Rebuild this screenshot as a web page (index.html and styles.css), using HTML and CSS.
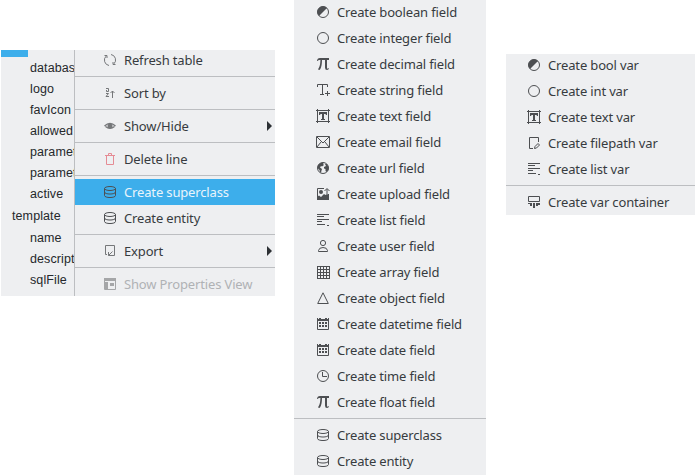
FILE: index.html
```html
<!DOCTYPE html>
<html lang="en">
<head>
<meta charset="utf-8">
<title>Context menus</title>
<link rel="stylesheet" href="styles.css">
</head>
<body>
<svg class="defs" aria-hidden="true">
  <symbol id="bool" viewBox="0 0 16 16"><circle cx="8" cy="8" r="5.5"/><path class="f" d="M4 12A5.5 5.5 0 0 1 12 4Z"/></symbol>
  <symbol id="circle" viewBox="0 0 16 16"><circle cx="8" cy="8" r="5.5"/></symbol>
  <symbol id="pi" viewBox="0 0 16 16"><path class="f" d="M2 5C2.3 3 3 2 5 2H14V4H12V11.5Q12 12.7 12.8 12.7Q13.2 12.700 13.500 12H14Q13.800 14 12 14Q10 14 10 11.500V4H7C7 8 6.500 11 5.200 13.200Q4.400 14.400 3.200 13.600Q2.800 13 3.800 12C5 10 5.300 7 5.400 4H4.500Q3 4 2.700 5Z"/></symbol>
  <symbol id="string" viewBox="0 0 16 16"><path d="M2.500 5V2.500H12.500V5M7.500 2.500V12.500M5 12.500H9M12.500 9V14M10 11.500H15"/></symbol>
  <symbol id="text" viewBox="0 0 16 16"><path d="M1 2.500H15M1 13.500H15M2.500 1V15M13.500 1V15"/><path class="f" d="M4 4H12V7H11L10.500 6H9V11H10V12H6V11H7V6H5.500L5 7H4Z"/></symbol>
  <symbol id="mail" viewBox="0 0 16 16"><path d="M1.500 2.500H14.500V13.500H1.500ZM2 3L8 9L14 3M2 13L6 8M14 13L10 8"/></symbol>
  <symbol id="globe" viewBox="0 0 16 16"><circle cx="8" cy="8" r="5.500"/><path class="f" d="M3 5Q5 2 9 2.500L8 4L9 5L7 6.500L6 6L5 7.500L7 9L6.500 10.500L6 13Q4.500 12 4.500 10L2.500 8ZM10 4L12 4L13.500 7V10L11.500 12L10.500 11V9L9 8.500V7L11 6Z"/></symbol>
  <symbol id="upload" viewBox="0 0 16 16"><path d="M9 2.500H2.500V13.500H13.500V8M12 8V3M9.500 5L12 2.500L14.500 5"/><circle class="f" cx="6" cy="6" r="2"/><path class="f" d="M2 11L4 9.500L6 11L9 8L10.500 9L12 8L14 9V14H2Z"/></symbol>
  <symbol id="list" viewBox="0 0 16 16"><path d="M2 2.500H14M2 4.500H9M2 7.500H14M2 9.500H7M2 12.500H10M12 13.500H14"/></symbol>
  <symbol id="user" viewBox="0 0 16 16"><circle cx="8" cy="5" r="2.600"/><path d="M3.500 13.500V12.500Q4 9.500 8 9.500T12.500 12.500V13.500Z"/></symbol>
  <symbol id="array" viewBox="0 0 16 16"><path d="M2.500 2V15M5.500 2V15M8.500 2V15M11.500 2V15M14.500 2V15M2 2.500H15M2 5.500H15M2 8.500H15M2 11.500H15M2 14.500H15"/></symbol>
  <symbol id="object" viewBox="0 0 16 16"><path d="M8 2.800L13.300 13.500H2.700Z"/></symbol>
  <symbol id="date" viewBox="0 0 16 16"><path d="M2.500 2V13.500H13.500V2"/><path class="f" d="M2 3H4V2H6V3H10V2H12V3H14V5H2ZM4 6H6V8H4ZM7 6H9V8H7ZM10 6H12V8H10ZM4 9H6V11H4ZM7 9H9V11H7ZM10 9H12V11H10Z"/></symbol>
  <symbol id="time" viewBox="0 0 16 16"><circle cx="8" cy="8" r="5.500"/><path d="M7.500 4V8.500H12"/></symbol>
  <symbol id="db" viewBox="0 0 16 16"><ellipse cx="8" cy="4.500" rx="5.500" ry="2"/><path d="M2.500 4.500V11.500C2.500 14.200 13.500 14.200 13.500 11.500V4.500M2.500 8C2.500 10.700 13.500 10.700 13.500 8"/></symbol>
  <symbol id="file" viewBox="0 0 16 16"><path d="M7 13.500H3.500V2.500H12.500V7M8.500 13.500L9 11.500L12 8.500L13.500 10L10.500 13Z"/></symbol>
  <symbol id="container" viewBox="0 0 16 16"><path d="M2.500 2.500H13.500V7.500H2.500Z"/><path class="f" d="M2 9H6V12H4V10H2ZM7 9H9V14H7ZM10 9H14V11H12V12H10Z"/></symbol>
  <symbol id="refresh" viewBox="0 0 16 16"><path d="M7 13.500A5.500 5.500 0 0 1 4 4.200M2.500 3.500H5V6M9 2.500A5.500 5.500 0 0 1 12 11.800M13.500 12.500H11V10"/></symbol>
  <symbol id="sort" viewBox="0 0 16 16"><path d="M4 3.500H6.500V6.500H4.500V5M4 8.500H6.500L4 11.500H7M10.500 13V6M8.500 8L10.500 6L12.500 8"/></symbol>
  <symbol id="eye" viewBox="0 0 16 16"><path stroke-width="1.3" d="M2.500 8Q8 3 13.500 8M3.500 8.500Q8 12 12.500 8.500"/><circle class="f" cx="8" cy="8" r="2.500"/></symbol>
  <symbol id="trash" viewBox="0 0 16 16"><path d="M3 4.500H13M4.500 4.500V13.500H11.500V4.500M6.500 4V2.500H9.500V4"/></symbol>
  <symbol id="export" viewBox="0 0 16 16"><path d="M5 11.500H3.500V2.500H12.500V12.500H10M10.500 8.500L6.500 12.500M6.500 9V12.500H10"/></symbol>
  <symbol id="props" viewBox="0 0 16 16"><path d="M2.500 2.500H13.500V13.500H2.500Z"/><path class="f" d="M2 2H14V5H2ZM3 6H6V13H3ZM8 7H12V10H8Z"/></symbol>
</svg>
<main class="board">
  <section class="editor">
    <div class="tree">
      <div class="selection"></div>
      <ul class="nodes">
        <li>databas</li><li>logo</li><li>favIcon</li><li>allowed</li><li>paramet</li><li>paramet</li><li>active</li>
        <li class="parent">template</li>
        <li>name</li><li>descript</li><li>sqlFile</li>
      </ul>
    </div>
    <ul class="menu context">
      <li class="item"><svg class="soft"><use href="#refresh"/></svg>Refresh table</li>
      <li class="sep"></li>
      <li class="item"><svg class="soft"><use href="#sort"/></svg>Sort by</li>
      <li class="sep"></li>
      <li class="item sub"><svg class="soft"><use href="#eye"/></svg>Show/Hide</li>
      <li class="sep"></li>
      <li class="item"><svg class="danger"><use href="#trash"/></svg>Delete line</li>
      <li class="sep"></li>
      <li class="item active"><svg><use href="#db"/></svg>Create superclass</li>
      <li class="item"><svg><use href="#db"/></svg>Create entity</li>
      <li class="sep"></li>
      <li class="item sub"><svg class="soft"><use href="#export"/></svg>Export</li>
      <li class="sep"></li>
      <li class="item disabled"><svg><use href="#props"/></svg>Show Properties View</li>
    </ul>
  </section>
  <ul class="menu fields">
    <li class="item"><svg><use href="#bool"/></svg>Create boolean field</li>
    <li class="item"><svg><use href="#circle"/></svg>Create integer field</li>
    <li class="item"><svg><use href="#pi"/></svg>Create decimal field</li>
    <li class="item"><svg><use href="#string"/></svg>Create string field</li>
    <li class="item"><svg><use href="#text"/></svg>Create text field</li>
    <li class="item"><svg><use href="#mail"/></svg>Create email field</li>
    <li class="item"><svg><use href="#globe"/></svg>Create url field</li>
    <li class="item"><svg><use href="#upload"/></svg>Create upload field</li>
    <li class="item"><svg><use href="#list"/></svg>Create list field</li>
    <li class="item"><svg><use href="#user"/></svg>Create user field</li>
    <li class="item"><svg><use href="#array"/></svg>Create array field</li>
    <li class="item"><svg><use href="#object"/></svg>Create object field</li>
    <li class="item"><svg><use href="#date"/></svg>Create datetime field</li>
    <li class="item"><svg><use href="#date"/></svg>Create date field</li>
    <li class="item"><svg><use href="#time"/></svg>Create time field</li>
    <li class="item"><svg><use href="#pi"/></svg>Create float field</li>
    <li class="sep"></li>
    <li class="item"><svg><use href="#db"/></svg>Create superclass</li>
    <li class="item"><svg><use href="#db"/></svg>Create entity</li>
  </ul>
  <ul class="menu vars">
    <li class="item"><svg><use href="#bool"/></svg>Create bool var</li>
    <li class="item"><svg><use href="#circle"/></svg>Create int var</li>
    <li class="item"><svg><use href="#text"/></svg>Create text var</li>
    <li class="item"><svg><use href="#file"/></svg>Create filepath var</li>
    <li class="item"><svg><use href="#list"/></svg>Create list var</li>
    <li class="sep"></li>
    <li class="item"><svg><use href="#container"/></svg>Create var container</li>
  </ul>
</main>
</body>
</html>
```
FILE: styles.css
```css
* { box-sizing: border-box; }
body { margin: 0; background: #fff; overflow: hidden; }
ul { list-style: none; margin: 0; padding: 0; }
.defs { display: none; }
.board { display: flex; align-items: flex-start; height: 475px; }
.editor { display: flex; width: 274px; height: 246px; margin: 50px 19px 0 1px; background: #eeeff1; overflow: hidden; }
.tree { width: 73px; overflow: hidden; }
.selection { width: 27px; height: 7px; background: #3daeeb; }
.nodes { padding-top: 1px; font: 12.5px/21px "Liberation Sans", Arial, sans-serif; letter-spacing: 0.1px; color: #25282b; white-space: nowrap; }
.nodes li { height: 21px; padding-left: 29px; }
.nodes .parent { height: 22px; padding-left: 11px; line-height: 23px; }
.nodes .parent ~ li { line-height: 22px; }
.menu { background: #eeeff1; color: #373b40; font: 13px/26px "Noto Sans", sans-serif; letter-spacing: -0.15px; overflow: hidden; flex: none; }
.context { width: 201px; border-left: 1px solid #bcbec1; }
.context .item:first-child { margin-top: -3px; }
.fields { width: 192px; height: 475px; margin-right: 20px; }
.fields .item:first-child { margin-top: -1px; }
.vars { width: 189px; height: 161px; margin-top: 54px; }
.vars .item:first-child { margin-top: -2px; }
.item { display: flex; align-items: center; gap: 6px; height: 26px; white-space: nowrap; }
.context .item { padding-left: 27px; }
.fields .item { padding-left: 21px; }
.vars .item { padding-left: 20px; }
.sep { height: 7px; padding-top: 3px; }
.sep::before { content: ""; display: block; height: 1px; background: #bcbec1; }
.item svg { width: 16px; height: 16px; flex: none; fill: none; stroke: #4d4f52; stroke-width: 1; }
.f { fill: #4d4f52; stroke: none; }
.item .soft { opacity: 0.75; }
.item .danger { stroke: #e58b94; }
.item.active { background: #3daeeb; color: #e9f4fb; }
.item.disabled { color: #b0b2b5; }
.item.disabled svg { opacity: 0.45; }
.sub::after { content: ""; margin-left: auto; margin-right: 3px; border: 5px solid transparent; border-left-color: #2c3034; border-right: 0; }
```
